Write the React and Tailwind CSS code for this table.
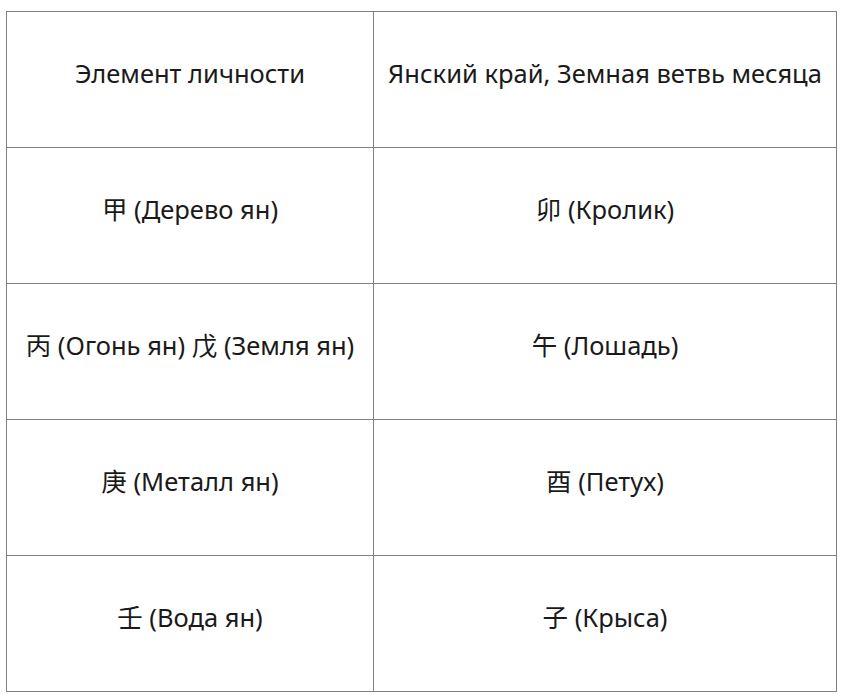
const rows = [
  ["Элемент личности", "Янский край, Земная ветвь месяца"],
  ["甲 (Дерево ян)", "卯 (Кролик)"],
  ["丙 (Огонь ян) 戊 (Земля ян)", "午 (Лошадь)"],
  ["庚 (Металл ян)", "酉 (Петух)"],
  ["壬 (Вода ян)", "子 (Крыса)"],
];

export default function App() {
  return (
    <div className="bg-white w-[846px] h-[694px] pt-[11px] pl-[6px] font-['Noto_Sans','Noto_Sans_CJK_SC',sans-serif] text-[#1a1a1a]">
      <table className="border-collapse w-[831px] table-fixed">
        <colgroup>
          <col className="w-[367px]" />
          <col />
        </colgroup>
        <tbody>
          {rows.map((r, i) => (
            <tr key={i} className="h-[136px]">
              {r.map((c, j) => (
                <td
                  key={j}
                  className="border border-[#808080] text-center align-middle text-[25.5px] leading-[32px] pb-[14px] px-0 whitespace-nowrap"
                >
                  {c}
                </td>
              ))}
            </tr>
          ))}
        </tbody>
      </table>
    </div>
  );
}
